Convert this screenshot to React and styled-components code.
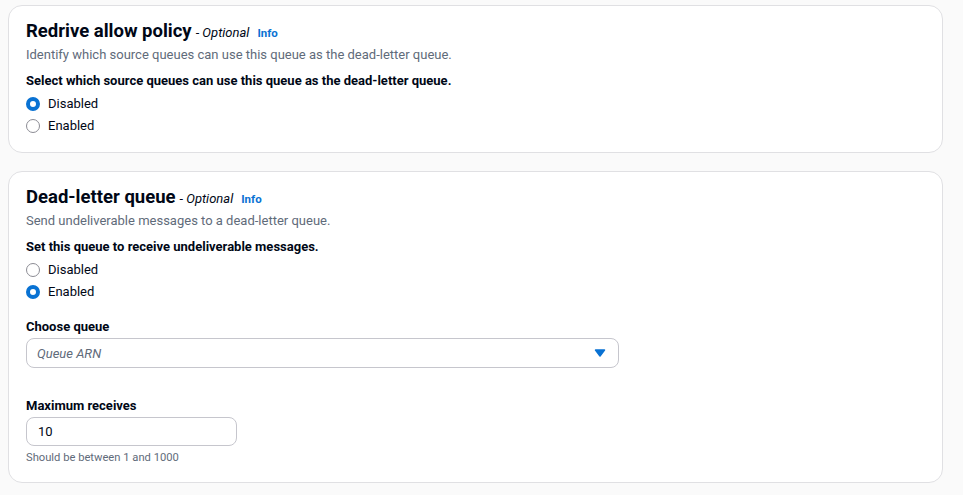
import styled, { createGlobalStyle } from "styled-components";

const GlobalStyle = createGlobalStyle`
  body {
    margin: 0;
    background: #fafafa;
    font-family: Roboto, "Noto Sans", sans-serif;
    color: #000716;
  }
`;

function Radio({ checked, label }) {
  return (
    <RadioRow>
      <RadioDot checked={checked} />
      <RadioLabel>{label}</RadioLabel>
    </RadioRow>
  );
}

function Header({ title, description }) {
  return (
    <>
      <TitleLine>
        <Title>{title}</Title>
        <Optional> - Optional</Optional>
        <InfoLink>Info</InfoLink>
      </TitleLine>
      <Description>{description}</Description>
    </>
  );
}

export default function App() {
  return (
    <Page>
      <GlobalStyle />
      <Card>
        <Header
          title="Redrive allow policy"
          description="Identify which source queues can use this queue as the dead-letter queue."
        />
        <FieldLabel>
          Select which source queues can use this queue as the dead-letter queue.
        </FieldLabel>
        <RadioGroup>
          <Radio checked label="Disabled" />
          <Radio label="Enabled" />
        </RadioGroup>
      </Card>

      <Card>
        <Header
          title="Dead-letter queue"
          description="Send undeliverable messages to a dead-letter queue."
        />
        <FieldLabel>Set this queue to receive undeliverable messages.</FieldLabel>
        <RadioGroup>
          <Radio label="Disabled" />
          <Radio checked label="Enabled" />
        </RadioGroup>

        <Field $top={14}>
          <SmallLabel>Choose queue</SmallLabel>
          <Select>
            <Placeholder>Queue ARN</Placeholder>
            <svg width="12" height="10" viewBox="0 0 12 10">
              <path d="M1.5 2h9L6 8z" fill="#0972d3" stroke="#0972d3" strokeWidth="1.5" strokeLinejoin="round" />
            </svg>
          </Select>
        </Field>

        <Field $top={28}>
          <SmallLabel>Maximum receives</SmallLabel>
          <NumberInput>10</NumberInput>
          <Hint>Should be between 1 and 1000</Hint>
        </Field>
      </Card>
    </Page>
  );
}

const Page = styled.div`
  display: flex;
  flex-direction: column;
  gap: 18px;
  padding: 5px 20px 12px 8px;
`;

const Card = styled.section`
  background: #fff;
  border: 1px solid #e0e0e3;
  border-radius: 14px;
  padding: 14px 17px 15px;
  display: flex;
  flex-direction: column;
`;

const TitleLine = styled.div`
  display: flex;
  align-items: baseline;
  line-height: 22px;
`;

const Title = styled.h2`
  margin: 0;
  font-size: 18.5px;
  font-weight: 700;
  color: #000716;
`;

const Optional = styled.span`
  font-size: 13px;
  font-style: italic;
  color: #000716;
  margin-left: 4px;
`;

const InfoLink = styled.a`
  font-size: 11.5px;
  font-weight: 700;
  color: #0972d3;
  margin-left: 8px;
`;

const Description = styled.p`
  margin: 1px 0 0;
  font-size: 13px;
  line-height: 20px;
  color: #5f6b7a;
`;

const FieldLabel = styled.div`
  margin-top: 6px;
  font-size: 13px;
  font-weight: 700;
  line-height: 20px;
`;

const RadioGroup = styled.div`
  display: flex;
  flex-direction: column;
  margin-top: 2px;
`;

const RadioRow = styled.label`
  display: flex;
  align-items: center;
  gap: 8px;
  height: 22px;
`;

const RadioDot = styled.span`
  box-sizing: border-box;
  width: 14px;
  height: 14px;
  border-radius: 50%;
  background: #fff;
  border: ${(p) => (p.checked ? "4px solid #0972d3" : "1.5px solid #8c8c94")};
`;

const RadioLabel = styled.span`
  font-size: 13px;
  line-height: 20px;
`;

const Field = styled.div`
  margin-top: ${(p) => p.$top}px;
  display: flex;
  flex-direction: column;
  align-items: flex-start;
`;

const SmallLabel = styled.div`
  font-size: 13px;
  font-weight: 700;
  line-height: 20px;
  margin-bottom: 1px;
`;

const Select = styled.div`
  box-sizing: border-box;
  width: 593px;
  height: 30px;
  border: 1px solid #c6c6cd;
  border-radius: 8px;
  display: flex;
  align-items: center;
  justify-content: space-between;
  padding: 0 12px 0 10px;
`;

const Placeholder = styled.span`
  font-size: 13px;
  font-style: italic;
  color: #5f6b7a;
`;

const NumberInput = styled.div`
  box-sizing: border-box;
  width: 211px;
  height: 29px;
  border: 1px solid #c6c6cd;
  border-radius: 8px;
  display: flex;
  align-items: center;
  padding: 0 11px;
  font-size: 13px;
`;

const Hint = styled.div`
  margin: 4px 0 1px;
  font-size: 11.2px;
  line-height: 16px;
  color: #5f6b7a;
`;
